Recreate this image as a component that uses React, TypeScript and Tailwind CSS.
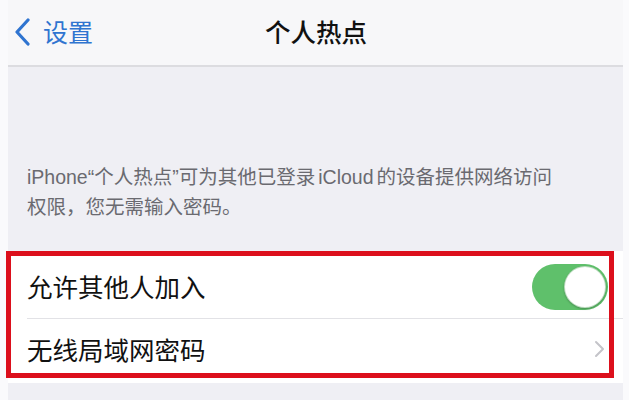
import React from 'react';

const font = { fontFamily: '"Noto Sans CJK SC", "Noto Sans", sans-serif' };
const descFont = { fontFamily: '"Liberation Sans", "Noto Sans CJK SC", sans-serif' };

function BackChevron() {
  return (
    <svg width="18" height="28" viewBox="0 0 18 28" className="shrink-0">
      <polyline
        points="15,2 4,14 15,26"
        fill="none"
        stroke="#2f74d0"
        strokeWidth="3.2"
        strokeLinecap="round"
        strokeLinejoin="round"
      />
    </svg>
  );
}

function Toggle() {
  return (
    <div className="w-[76px] h-[46px] rounded-full bg-[#5fc06b] flex items-center justify-end p-[2px]">
      <div className="w-[42px] h-[42px] rounded-full bg-white border border-[#5aa862]/40 shadow-[0_1px_2px_rgba(0,0,0,0.25)]" />
    </div>
  );
}

function RowChevron() {
  return (
    <svg width="11" height="18" viewBox="0 0 11 18">
      <polyline
        points="2,2 9,9 2,16"
        fill="none"
        stroke="#c4c4c9"
        strokeWidth="2"
        strokeLinecap="round"
        strokeLinejoin="round"
      />
    </svg>
  );
}

export default function App() {
  return (
    <div className="w-[629px] h-[400px] bg-[#fafafc] overflow-hidden" style={font}>
      <div className="ml-2 w-[615px] h-full flex flex-col bg-[#efeff4]">
        {/* nav bar */}
        <div className="h-[67px] shrink-0 bg-[#f7f7f9] border-b-2 border-[#dcdce0] relative flex items-center">
          <div className="flex items-center gap-[12px] pl-[5px] pb-[2px]">
            <BackChevron />
            <span className="text-[25px] leading-none text-[#2f74d0]">设置</span>
          </div>
          <span className="absolute left-[257px] top-[18px] text-[25.5px] leading-none font-medium text-[#111]">
            个人热点
          </span>
        </div>

        {/* description */}
        <div className="h-[184px] shrink-0 pt-[95px] pl-[19px]">
          <p className="text-[19.5px] leading-[30px] text-[#6a6a70] whitespace-nowrap" style={descFont}>
            iPhone“个人热点”可为其他已登录<span className="ml-[3px]">iCloud</span>
            <span className="ml-[3px]">的设备提供网络访问</span>
            <br />
            权限，您无需输入密码。
          </p>
        </div>

        {/* group */}
        <div className="relative bg-white">
          <div className="h-[67px] flex items-center justify-between pl-[19px] pr-[15px] pt-[4px]">
            <span className="text-[25.5px] text-[#111]">允许其他人加入</span>
            <Toggle />
          </div>
          <div className="ml-[19px] h-px bg-[#e2e2e6]" />
          <div className="h-[64px] flex items-center justify-between pl-[19px] pr-[18px] pb-[4px]">
            <span className="text-[25.5px] text-[#111]">无线局域网密码</span>
            <RowChevron />
          </div>
          {/* red annotation box */}
          <div className="absolute -left-[2px] top-0 w-[608px] h-[127px] border-[5px] border-[#dc0f1c] pointer-events-none" />
        </div>
      </div>
    </div>
  );
}
